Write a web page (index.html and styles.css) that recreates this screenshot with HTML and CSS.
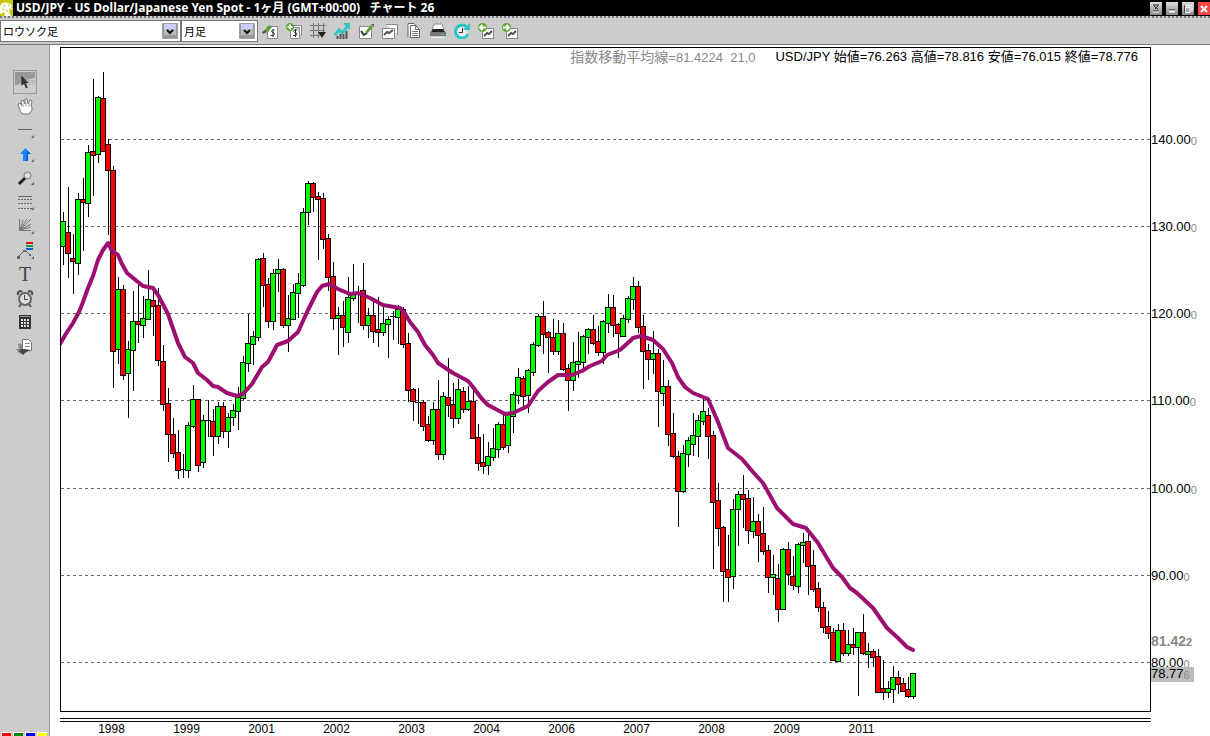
FILE: index.html
```html
<!DOCTYPE html>
<html lang="ja">
<head>
<meta charset="utf-8">
<title>USD/JPY チャート 26</title>
<link rel="stylesheet" href="styles.css">
</head>
<body>
<header class="titlebar">
  <svg class="logo" viewBox="0 0 13 16"><path fill="#c8c400" d="M0 0h13v16H0z"/><path fill="#fff" d="M0 9V6l2-3 2 0 2-1 2 1 3 1 1 2-1 1 1 2-1 1-1-2-1 1 1 2-1 2 2 2v2H4l1-3-2-2-1 2-2-1z"/><path d="M3 6h2M8 5h2M2 9l2 1M6 9l2 3" stroke="#c8c400"/></svg>
  <h1 class="title">USD/JPY - US Dollar/Japanese Yen Spot - 1ヶ月 (GMT+00:00)&nbsp;&nbsp; チャート 26</h1>
  <div class="window-buttons">
    <button class="win" aria-label="ピン"><svg viewBox="0 0 12 13"><path d="M3 3h6M4 4l4 3M8 4L5 7M3 9h6" stroke="#222" fill="none"/><path d="M3 10h6" stroke="#fff"/></svg></button>
    <button class="win" aria-label="最小化"><svg viewBox="0 0 12 13"><path d="M3 8h6" stroke="#222"/><path d="M3 9.500h6" stroke="#fff" stroke-width="2"/></svg></button>
    <button class="win" aria-label="最大化"><svg viewBox="0 0 12 13"><path d="M3 3.500h7v6M3 5.500h5v5H3z" stroke="#fff" fill="none"/><path d="M2.500 3v8" stroke="#444"/></svg></button>
    <button class="win close" aria-label="閉じる"><svg viewBox="0 0 12 13"><path d="M3 4l6 6M9 4l-6 6" stroke="#fff" stroke-width="2"/></svg></button>
  </div>
</header>

<div class="toolbar">
  <div class="combo combo-type">
    <select aria-label="チャートの種類"><option>ロウソク足</option></select>
    <svg class="arrow" viewBox="0 0 16 16"><path fill="#999" stroke="#777" stroke-dasharray="1 1" d="M.5.5h15v15H.5z"/><path fill="#ccf" d="M2 1h12v5H2z"/><path fill="#bbb" d="M2 6h12v6H2z"/><path d="M5 7l3 3 3-3" fill="none" stroke="#111" stroke-width="2"/></svg>
  </div>
  <div class="combo combo-period">
    <select aria-label="期間"><option>月足</option></select>
    <svg class="arrow" viewBox="0 0 16 16"><path fill="#999" stroke="#777" stroke-dasharray="1 1" d="M.5.5h15v15H.5z"/><path fill="#ccf" d="M2 1h12v5H2z"/><path fill="#bbb" d="M2 6h12v6H2z"/><path d="M5 7l3 3 3-3" fill="none" stroke="#111" stroke-width="2"/></svg>
  </div>
  <div class="actions">
    <button aria-label="通貨を変更"><svg viewBox="0 0 16 16"><path d="M6.500 3.500h9v12h-10v-8" fill="#fff" stroke="#888"/><path d="M12.500 7h-2l-1 1 1 1.500h1l1 1.500-1 1.500h-3M11 6v8" stroke="#333" fill="none"/><path d="M2 8l5-6 3 2-4 5z" fill="#5a9a32"/><path d="M0 9l3-2 2 2-4 2z" fill="#555"/></svg></button>
    <button aria-label="通貨を追加"><svg viewBox="0 0 16 16"><path d="M7 2.500h8.500v10M4.500 7v8.500h9v-11h-5" fill="#fff" stroke="#888"/><path d="M11 7H8.500l-1 1.500 1 1h1.500l1 1.500-1 1.500H7M9.500 6v8" stroke="#333" fill="none"/><circle cx="4" cy="4" r="4" fill="#5fa837"/><path d="M4 1.500v5M1.500 4h5" stroke="#fff" stroke-width="2"/></svg></button>
    <button aria-label="グリッド"><svg viewBox="0 0 16 16"><path d="M3.500 0v15M8.500 0v15M13.500 0v9M0 2.500h16M0 7.500h15M0 12.500h10" stroke="#777"/><path d="M8 9h8l-4 6z" fill="#222"/></svg></button>
    <button aria-label="トレンド"><svg viewBox="0 0 16 16"><path d="M1 12l4-5 3 3 6-7" stroke="#2cc5c8" stroke-width="3" fill="none"/><path d="M9 0h7v7z" fill="#2cc5c8"/><path d="M3.500 16v-3M6.500 16v-5M9.500 16v-5M12.500 16V8" stroke="#555" stroke-width="2"/></svg></button>
    <button aria-label="描画を編集"><svg viewBox="0 0 16 16"><path d="M1.500 3.500h12v12h-12z" fill="#fff" stroke="#888"/><path d="M3 8l3 4 3-2" stroke="#333" stroke-width="2" fill="none"/><path d="M7 9l6-7 2 2-6 7z" fill="#5a9a32"/><path d="M13 1h3v3z" fill="#555"/></svg></button>
    <button aria-label="複製"><svg viewBox="0 0 16 16"><path d="M4 1.500h11.500V12M.5 5.500h12v10H.5z" fill="#fff" stroke="#888"/><path d="M2 12l3-3 2 1 4-3" stroke="#555" stroke-width="2" fill="none"/></svg></button>
    <button aria-label="コピー"><svg viewBox="0 0 16 16"><path d="M2 14V.5h6l3 3M4.500 2.500h5l4 4v8h-9z" fill="#fff" stroke="#666"/><path d="M9.500 3v3.500H13M6 8.500h6M6 10.500h6M6 12.500h6" stroke="#777" fill="none"/></svg></button>
    <button aria-label="印刷"><svg viewBox="0 0 16 16"><path d="M4 1h8l2 6H2z" fill="#fff" stroke="#888"/><path d="M3 6h10l2 3H1z" fill="#222"/><path d="M0 9h16v4H0z" fill="#777"/><path d="M2 14.500h12" stroke="#eee"/><path d="M11 11.500h3" stroke="#2cc5c8"/></svg></button>
    <button aria-label="更新"><svg viewBox="0 0 16 16"><circle cx="8" cy="9" r="5" fill="#eee"/><path d="M13 4.500A6.500 6.500 0 1 0 14 11" stroke="#2cc5c8" stroke-width="3" fill="none"/><path d="M16 0v7H9z" fill="#2cc5c8"/><path d="M8.500 5v4.500H5" stroke="#333" fill="none"/></svg></button>
    <button aria-label="前のチャート"><svg viewBox="0 0 16 16"><path d="M4.500 5.500h11v10h-11z" fill="#fff" stroke="#888"/><path d="M6 13l3-3 2 1 3-3" stroke="#555" stroke-width="2" fill="none"/><circle cx="4.500" cy="4.500" r="4.500" fill="#5fa837"/><path d="M8 4.500H2M4.500 2L2 4.500 4.500 7" stroke="#fff" stroke-width="2" fill="none"/></svg></button>
    <button aria-label="次のチャート"><svg viewBox="0 0 16 16"><path d="M4.500 5.500h11v10h-11z" fill="#fff" stroke="#888"/><path d="M6 13l3-3 2 1 3-3" stroke="#555" stroke-width="2" fill="none"/><circle cx="4.500" cy="4.500" r="4.500" fill="#5fa837"/><path d="M1 4.500h6M4.500 2L7 4.500 4.500 7" stroke="#fff" stroke-width="2" fill="none"/></svg></button>
  </div>
</div>

<main class="workspace">
  <aside class="sidebar">
    <div class="tools">
      <button class="active" aria-label="選択"><svg viewBox="0 0 24 24"><path fill="#999" d="M1 1h22v6l-10 3-12 6z"/><path fill="none" stroke="#999" stroke-dasharray="1 1" d="M12 10.500h11M8 12.500h15M4 14.500h19"/><path d="M8 5v11l3-2 2 5 2-1-2-5h3z" fill="#333"/></svg></button>
      <button aria-label="移動"><svg viewBox="0 -1 24 24"><path d="M5 9l2-1 2 3-1-5 2-1 2 4V4h2l1 5 2-4 2 1-1 5 1 1v3l-3 4H9l-2-4z" fill="#fff" stroke="#777"/><path d="M10 8v4M13 7v5M16 8v4" stroke="#aaa"/></svg></button>
      <button aria-label="線"><svg viewBox="0 0 24 24"><path d="M5 11.500h14" stroke="#666"/><path d="M21 17v3h-3z" fill="#666"/></svg></button>
      <button aria-label="矢印"><svg viewBox="0 -2 24 24"><path d="M12.500 4L7 10h3v7h5v-7h3z" fill="#1687ff"/><path d="M14 7l4 3h-3v7h-2z" fill="#0957d0"/><path d="M21 15v3h-3z" fill="#666"/></svg></button>
      <button aria-label="拡大"><svg viewBox="0 -1 24 24"><circle cx="14.500" cy="8.500" r="3.500" fill="#ddd" stroke="#777"/><path d="M6 17l6-6" stroke="#222" stroke-width="3"/><path d="M21 15v3h-3z" fill="#666"/></svg></button>
      <button aria-label="水平線"><svg viewBox="0 0 24 24"><path d="M5 6.500h14" stroke="#666"/><path d="M5 9.500h14M5 13.500h14M5 18.500h14" stroke="#666" stroke-dasharray="2 1"/><path d="M21 17v3h-3z" fill="#666"/></svg></button>
      <button aria-label="ファン"><svg viewBox="0 0 24 24"><path d="M6.500 5v11.500H18M7 16L10 6M7 16l7-11M7 16L18 5M7 16l11-6M7 16l11-3" stroke="#777" fill="none"/><path d="M21 17v3h-3z" fill="#666"/></svg></button>
      <button aria-label="波動"><svg viewBox="0 -1 24 24"><path d="M13 3h7v2h-7z" fill="#f00"/><path d="M13 6h7v2h-7z" fill="#00a060"/><path d="M13 9h7v2h-7z" fill="#06c"/><path d="M5 18l7-7 5 5" stroke="#666" fill="none"/><path d="M4 17h3v3H4zM10 11h3v2h-3zM16 15h2v2h-2zM21 17v3h-3z" fill="#666"/></svg></button>
      <button class="text-tool" aria-label="テキスト">T</button>
      <button aria-label="アラーム"><svg viewBox="0 -1 24 24"><path d="M8 17l-2 3M16 17l2 3M5 8c-1-3 2-5 4-3M19 8c1-3-2-5-4-3" stroke="#555" stroke-width="2" fill="none"/><circle cx="12" cy="12" r="6" fill="#ddd" stroke="#666" stroke-width="2"/><path d="M11.500 8v4.500H15" stroke="#444" fill="none"/></svg></button>
      <button aria-label="計算機"><svg viewBox="0 0 24 24"><path d="M6 5h12v14H6z" fill="#333"/><path d="M7 6.500h10" stroke="#999"/><path d="M8 10h9M8 13h9M8 16h9" stroke="#ddd" stroke-width="2" stroke-dasharray="2 1"/></svg></button>
      <button aria-label="書き出し"><svg viewBox="0 -1 24 24"><path d="M9.500 4.500h6l3 3v8h-9z" fill="#fff" stroke="#777"/><path d="M12 8.500h5M12 11.500h5" stroke="#888"/><path d="M5 9c2-1 3 0 4 1v4h3l-5 5-4-5h3z" fill="#888"/><path d="M8 14h4l5 1-5 3-2 2-4-4z" fill="#444"/></svg></button>
    </div>
    <div class="palette">
      <button class="swatch red" aria-label="赤"></button>
      <button class="swatch green" aria-label="緑"></button>
      <button class="swatch blue" aria-label="青"></button>
      <button class="swatch yellow" aria-label="黄"></button>
    </div>
  </aside>

  <section class="chart">
    <div class="plot">
      <svg class="candles" id="candles" aria-label="USD/JPY 月足"></svg>
      <p class="legend"><span class="average"><span class="average-name">指数移動平均線</span>=81.4224&nbsp; 21,0</span><span>USD/JPY 始値=76.263 高値=78.816 安値=76.015 終値=78.776</span></p>
    </div>
    <svg class="prices" id="prices"></svg>
    <div class="years"><span>1998</span><span>1999</span><span>2001</span><span>2002</span><span>2003</span><span>2004</span><span>2006</span><span>2007</span><span>2008</span><span>2009</span><span>2011</span></div>
  </section>
</main>
<script src="chart.js"></script>
</body>
</html>
```
FILE: styles.css
```css
* { box-sizing: border-box; }

body {
  margin: 0;
  min-height: 100vh;
  display: flex;
  flex-direction: column;
  overflow: hidden;
  background: #fff;
  color: #000;
  font-family: "Liberation Sans", "Noto Sans CJK JP", sans-serif;
  font-size: 12px;
}

button {
  padding: 0;
  border: 0;
  background: none;
  display: block;
}

svg { display: block; }

.titlebar {
  height: 16px;
  display: flex;
  align-items: center;
  background: #000;
  color: #fff;
}

.logo { width: 13px; height: 16px; }

.title {
  flex: 1;
  margin: 0 0 0 3px;
  font: bold 12px/16px "Noto Sans", "Noto Sans CJK JP", sans-serif;
  white-space: nowrap;
}

.window-buttons { display: flex; gap: 4px; }

.win {
  width: 12px;
  height: 13px;
  background: linear-gradient(#ddd, #888);
}

.win svg { width: 12px; height: 13px; }
.close { background: #f44; }

.toolbar {
  height: 29px;
  display: flex;
  align-items: center;
  background: #ccc;
  border-top: 2px dotted #777;
  border-bottom: 1px solid #777;
}

.combo { position: relative; height: 22px; }
.combo-type { width: 181px; }
.combo-period { width: 77px; }

.combo select {
  appearance: none;
  width: 100%;
  height: 22px;
  padding: 0 20px 0 2px;
  border: 1px solid #777;
  border-radius: 0;
  background: #fff;
  color: #000;
  font: 11px "Noto Sans CJK JP", sans-serif;
}

.arrow {
  position: absolute;
  right: 3px;
  top: 3px;
  width: 16px;
  height: 16px;
  pointer-events: none;
}

.actions {
  display: flex;
  gap: 8px;
  margin-left: 4px;
}

.actions svg { width: 16px; height: 16px; }

.workspace { flex: 1; display: flex; }

.sidebar {
  width: 50px;
  display: flex;
  flex-direction: column;
  justify-content: space-between;
  padding-top: 25px;
  background: #ccc;
  border-right: 1px solid #999;
}

.tools { margin-left: 13px; }
.tools button { width: 24px; height: 24px; }
.tools svg { width: 100%; height: 100%; }
.tools .active { border: 1px solid #999; }

.tools .text-tool {
  color: #444;
  font: 20px/24px "Liberation Serif", serif;
}

.palette {
  display: flex;
  gap: 2px;
  padding-left: 1px;
}

.swatch {
  width: 10px;
  height: 4px;
  border-top: 1px solid #fff;
  border-left: 1px solid #fff;
}

.red { background: #f00; }
.green { background: #080; }
.blue { background: #00f; }
.yellow { background: #ff0; }

.chart {
  flex: 1;
  display: grid;
  grid-template-columns: 1fr 59px;
  grid-template-rows: 1fr 24px;
  padding: 2px 0 0 10px;
}

.plot {
  position: relative;
  border: 1px solid #000;
}

.candles { width: 100%; height: 100%; }

.legend {
  position: absolute;
  top: 0;
  right: 12px;
  margin: 0;
  display: flex;
  gap: 20px;
  font: 13px/18px "Liberation Sans", "Noto Sans CJK JP", sans-serif;
  white-space: nowrap;
}

.average { color: #888; }
.average-name { font-size: 14px; }

.prices { width: 100%; height: 100%; font-size: 13px; }

.years {
  display: flex;
  margin-top: 6px;
  padding-left: 14px;
  border-top: 4px double #000;
  line-height: 15px;
}

.years span { width: 75px; text-align: center; }

.grid { stroke: #666; stroke-dasharray: 3 3; }
.wick { stroke: #000; }
.up { fill: #0f0; stroke: #000; }
.down { fill: #f00; stroke: #000; }
.ma { fill: none; stroke: #9c0f70; stroke-width: 4; stroke-linejoin: round; stroke-linecap: round; }
.minor { fill: #888; font-size: 11px; }
.ma-price { fill: #888; font-weight: bold; font-size: 14px; }
.last-price { fill: #bbb; }
```
FILE: chart.js
```js
// Candles: high, body top, body bottom, low, direction (1 up, 0 down)
const candles = [
[212,221,246,264,1],[187,232,253,277,0],[234,258,261,293,0],[193,199,263,274,1],[178,199,202,250,0],[145,152,203,216,1],
[79,151,155,195,0],[96,97,154,162,1],[72,98,151,151,0],[139,144,170,234,0],[166,170,351,387,0],[277,289,349,363,1],
[285,289,375,379,0],[341,349,373,417,1],[291,321,350,390,1],[285,321,324,342,0],[296,318,325,337,1],[270,299,319,319,1],
[290,300,306,335,0],[288,305,360,365,0],[345,361,404,410,0],[388,403,434,461,0],[418,434,453,457,0],[430,452,470,478,0],
[454,469,470,477,0],[422,425,470,477,1],[385,399,426,427,1],[399,399,465,471,0],[415,420,462,467,1],[400,420,421,436,0],
[409,421,436,455,0],[402,406,436,443,1],[402,406,431,437,0],[413,417,431,447,1],[404,410,417,425,1],[387,397,411,429,1],
[356,362,398,399,1],[314,343,363,371,1],[331,336,344,364,1],[258,259,337,340,1],[253,258,285,306,0],[278,284,321,327,0],
[269,273,321,329,1],[259,269,273,291,1],[268,269,325,327,0],[295,318,325,351,1],[284,292,319,319,1],[273,283,293,317,1],
[208,212,285,286,1],[181,183,212,224,1],[182,183,197,211,0],[192,196,199,259,0],[193,198,239,248,0],[234,238,277,290,0],
[262,276,318,329,0],[307,315,318,354,1],[301,315,327,346,0],[277,297,332,342,1],[264,294,298,300,1],[286,292,294,322,0],
[263,290,325,329,0],[308,315,325,337,1],[300,315,331,342,0],[297,329,332,346,0],[306,323,332,335,1],[316,319,324,357,1],
[311,316,317,339,0],[305,309,317,343,1],[307,309,344,347,0],[333,343,390,401,0],[388,389,401,420,0],[388,402,403,423,0],
[400,402,426,430,0],[416,424,440,441,0],[402,409,440,444,1],[380,409,454,459,0],[392,396,454,459,1],[358,397,405,416,0],
[383,404,418,427,0],[379,389,418,423,1],[387,391,409,412,0],[386,401,409,410,1],[389,401,438,438,0],[424,437,463,470,0],
[434,462,466,473,0],[442,456,465,474,1],[428,448,457,460,1],[422,424,449,457,1],[415,424,447,449,0],[413,414,445,452,1],
[392,394,416,432,1],[368,377,395,403,1],[376,378,396,406,0],[369,370,395,412,1],[342,344,372,375,1],[314,316,345,346,1],
[301,316,334,353,0],[331,332,337,372,0],[319,337,351,354,0],[320,333,351,354,1],[323,333,369,370,0],[364,368,380,410,0],
[342,362,380,390,1],[332,361,364,377,1],[335,336,362,367,1],[328,329,337,353,1],[315,329,343,344,0],[326,341,352,355,0],
[320,321,352,363,1],[294,307,323,332,1],[295,307,325,336,0],[323,324,333,357,0],[315,318,336,336,1],[296,298,319,322,1],
[277,286,299,309,1],[281,286,327,332,0],[315,326,351,388,0],[344,350,359,379,0],[331,353,359,373,1],[349,353,391,426,0],
[360,386,393,405,1],[380,386,434,445,0],[413,433,456,457,0],[451,456,491,526,0],[445,453,491,492,1],[437,440,454,466,1],
[413,435,444,455,1],[415,420,436,456,1],[398,411,421,424,1],[408,415,436,458,0],[431,435,502,568,0],[483,500,528,545,0],
[526,527,571,601,0],[535,569,577,601,0],[499,509,576,588,1],[491,494,509,545,1],[475,494,499,527,0],[490,498,530,543,0],
[497,521,531,537,1],[514,521,535,561,0],[507,533,551,554,0],[545,550,577,592,0],[555,574,577,594,1],[564,578,609,621,0],
[548,549,609,609,1],[542,549,574,584,0],[556,576,585,589,0],[543,544,586,592,1],[533,542,545,562,1],[534,541,566,594,0],
[550,565,589,591,0],[582,588,607,611,0],[602,607,627,632,0],[611,626,633,638,0],[628,632,660,660,0],[624,630,661,661,1],
[623,630,653,655,0],[630,644,653,655,1],[628,644,647,654,0],[632,632,647,695,1],[614,632,653,654,0],[643,651,654,667,1],
[649,651,657,666,0],[649,656,692,692,0],[660,688,692,699,0],[681,688,692,697,1],[666,677,689,702,1],[671,677,684,693,0],
[678,683,691,691,0],[677,689,696,697,0],[673,673,696,698,1]
];

const average = "60,344 67,332 73,323 79,312 83,302 88,288 93,276 98,260 103,250 108,243 112,251 118,255 122,264 127,273 138,282 143,286 153,288 158,295 168,314 178,343 185,357 193,363 198,373 207,380 213,386 218,387 227,393 237,396 243,394 252,384 262,367 268,362 277,345 288,341 298,332 308,310 317,292 322,286 329,284 338,289 350,294 358,293 370,298 383,305 400,308 404,312 410,322 418,332 425,345 433,355 438,363 453,373 468,381 473,387 482,399 488,405 505,414 513,413 528,406 538,391 548,382 558,375 572,375 582,371 590,366 602,361 607,355 620,350 630,341 633,338 641,336 653,340 663,349 672,363 678,377 685,387 693,393 708,399 718,422 728,448 742,459 753,472 763,483 777,508 793,524 806,528 818,543 833,568 842,577 850,588 857,593 873,608 887,628 898,638 907,647 913,650";

const levels = [[139, "140.00"], [226, "130.00"], [313, "120.00"], [400, "110.00"], [488, "100.00"], [575, "90.00"], [662, "80.00"]];

let plot = levels.map(([y]) => `<line class="grid" x1="0" x2="100%" y1="${y - 47.5}" y2="${y - 47.5}"/>`).join("");
plot += '<g transform="translate(-61 -48)">';
candles.forEach(([high, top, bottom, low, up], i) => {
  const x = 63 + i * 5;
  plot += `<path class="wick" d="M${x + 0.5} ${high}V${low + 1}"/>`;
  if (bottom - top === 1) {
    plot += `<path class="wick" d="M${x - 3} ${top + 0.5}h6"/>`;
  } else {
    plot += `<rect class="${up ? "up" : "down"}" x="${x - 2.5}" y="${top + 0.5}" width="5" height="${bottom - top}"/>`;
  }
});
plot += `<polyline class="ma" points="${average}"/></g>`;
document.getElementById("candles").innerHTML = plot;

const label = (y, text, last) => `<text y="${y}">${text}<tspan class="minor" dy="1">${last}</tspan></text>`;
let prices = levels.map(([y, text]) => label(y - 42, text, "0")).join("");
prices += '<text class="ma-price" y="599">81.42<tspan class="minor">2</tspan></text>';
prices += '<rect class="last-price" y="620" width="43" height="15"/>' + label(631, "78.77", "6");
document.getElementById("prices").innerHTML = prices;
```
